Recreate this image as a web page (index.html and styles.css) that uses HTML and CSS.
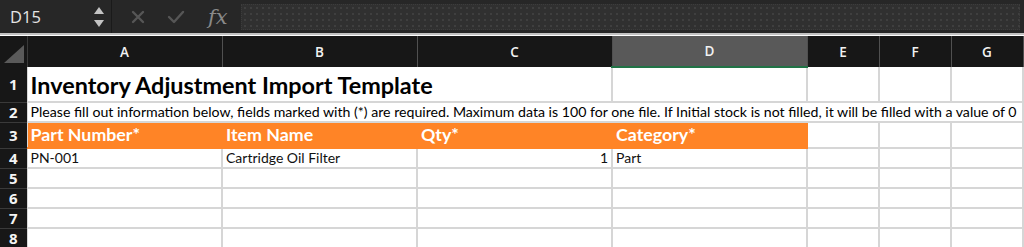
FILE: index.html
```html
<!DOCTYPE html>
<html lang="en">
<head>
    <meta charset="UTF-8" />
    <title>Inventory Adjustment Import Template</title>
    <link rel="stylesheet" href="styles.css">
</head>
<body>
    <div class="formula-bar">
        <div class="name-box">
            <span class="cell-ref">D15</span>
            <span class="stepper">
                <svg width="10" height="7" viewBox="0 0 10 7"><path d="M5 0 L10 7 L0 7 Z" fill="#c4c4c4"/></svg>
                <svg width="10" height="7" viewBox="0 0 10 7"><path d="M0 0 L10 0 L5 7 Z" fill="#c4c4c4"/></svg>
            </span>
        </div>
        <div class="bar-buttons">
            <svg class="icon" width="14" height="14" viewBox="0 0 14 14"><path d="M2 2 L12 12 M12 2 L2 12" stroke="#565656" stroke-width="2.4" stroke-linecap="round"/></svg>
            <svg class="icon" width="18" height="14" viewBox="0 0 18 14"><path d="M2 7 L7 12 L16 2" stroke="#565656" stroke-width="2.4" fill="none" stroke-linecap="round" stroke-linejoin="round"/></svg>
            <span class="fx">fx</span>
        </div>
        <div class="formula-input"></div>
    </div>

    <table class="sheet">
        <colgroup>
            <col class="c-row"><col class="c-wide"><col class="c-wide"><col class="c-wide"><col class="c-wide">
            <col class="c-narrow"><col class="c-narrow"><col class="c-narrow"><col>
        </colgroup>
        <thead>
            <tr>
                <th class="corner"><span class="corner-mark"></span></th>
                <th>A</th><th>B</th><th>C</th><th class="selected">D</th><th>E</th><th>F</th><th>G</th><th></th>
            </tr>
        </thead>
        <tbody>
            <tr class="r-title">
                <th>1</th>
                <td colspan="3" class="title">Inventory Adjustment Import Template</td>
                <td></td><td></td><td></td><td></td><td></td>
            </tr>
            <tr class="r-note">
                <th>2</th>
                <td colspan="7" class="note">Please fill out information below, fields marked with (*) are required. Maximum data is 100 for one file. If Initial stock is not filled, it will be filled with a value of 0</td>
                <td></td>
            </tr>
            <tr class="r-head">
                <th>3</th>
                <td class="head">Part Number*</td><td class="head">Item Name</td><td class="head">Qty*</td><td class="head">Category*</td>
                <td></td><td></td><td></td><td></td>
            </tr>
            <tr>
                <th>4</th>
                <td>PN-001</td><td>Cartridge Oil Filter</td><td class="num">1</td><td>Part</td>
                <td></td><td></td><td></td><td></td>
            </tr>
            <tr><th>5</th><td></td><td></td><td></td><td></td><td></td><td></td><td></td><td></td></tr>
            <tr><th>6</th><td></td><td></td><td></td><td></td><td></td><td></td><td></td><td></td></tr>
            <tr><th>7</th><td></td><td></td><td></td><td></td><td></td><td></td><td></td><td></td></tr>
            <tr><th>8</th><td></td><td></td><td></td><td></td><td></td><td></td><td></td><td></td></tr>
        </tbody>
    </table>
</body>
</html>
```

FILE: styles.css
```css
* { margin: 0; padding: 0; box-sizing: border-box; }
body {
    background: #ffffff;
    font-family: Lato, "Liberation Sans", sans-serif;
    width: 1024px;
    height: 247px;
    overflow: hidden;
}
.formula-bar {
    display: flex;
    align-items: center;
    height: 35px;
    background: #272727;
    border-bottom: 2px solid #c2c2c2;
}
.name-box {
    display: flex;
    align-items: center;
    justify-content: space-between;
    width: 112px;
    height: 100%;
    padding: 0 7px 0 10px;
    border-right: 1px solid #1a1a1a;
}
.cell-ref {
    color: #e4e4e4;
    font-family: "Open Sans", sans-serif;
    font-size: 16.5px;
}
.stepper {
    display: flex;
    flex-direction: column;
    gap: 6px;
}
.stepper svg { display: block; }
.bar-buttons {
    display: flex;
    align-items: center;
    width: 129px;
    height: 100%;
    padding-left: 19px;
}
.icon { display: block; margin-right: 22px; }
.fx {
    color: #8a8a8a;
    font-family: "DejaVu Serif", serif;
    font-style: italic;
    font-size: 21px;
    margin-left: 1px;
}
.formula-input {
    flex: 1;
    height: 26px;
    margin-right: 4px;
    background-color: #303030;
    background-image: radial-gradient(#3f3f3f 0.8px, transparent 0.9px);
    background-size: 6px 6px;
    border: 1px dotted #3c3c3c;
}

.sheet {
    border-collapse: collapse;
    table-layout: fixed;
    width: 1030px;
    background: #171717;
    margin-top: 1px;
}
.c-row { width: 27px; }
.c-wide { width: 195px; }
.c-narrow { width: 72px; }
.sheet thead th {
    height: 31px;
    background: #171717;
    color: #f2f2f2;
    font-family: "Open Sans", sans-serif;
    font-size: 13.5px;
    font-weight: 600;
    border-right: 1px solid #505050;
    text-align: center;
}
.sheet thead th.selected {
    background: #595959;
    border-bottom: 2px solid #217346;
}
.sheet thead th.corner {
    position: relative;
    border-right: 1px solid #3a3a3a;
}
.corner-mark {
    position: absolute;
    right: 3px;
    bottom: 4px;
    width: 0;
    height: 0;
    border-left: 20px solid transparent;
    border-bottom: 18px solid #5a5a5a;
}
.sheet tbody th {
    background: #171717;
    color: #f4f4f4;
    font-family: "Open Sans", sans-serif;
    font-size: 15px;
    font-weight: 700;
    line-height: 1;
    text-align: center;
    border-bottom: 1px solid #3a3a3a;
    border-right: 1px solid #d8d8d8;
}
.sheet td {
    height: 20px;
    background: #ffffff;
    color: #111111;
    font-size: 14px;
    line-height: 1;
    padding: 0 3px;
    white-space: nowrap;
    overflow: visible;
    border: 1px solid #d6d6d6;
    border-width: 0 2px 2px 0;
}
.sheet tr.r-title td, .sheet tr.r-title th { height: 35px; }
.sheet td.title {
    font-size: 23.4px;
    font-weight: 700;
    color: #000;
    padding-top: 4px;
}
.sheet td.note { font-size: 14.15px; color: #000; }
.sheet tr.r-head td, .sheet tr.r-head th { height: 26px; }
.sheet td.head {
    background: #ff8426;
    border-color: #ff8426;
    color: #ffffff;
    font-size: 17.8px;
    font-weight: 700;
}
.sheet td.num { text-align: right; }
```
